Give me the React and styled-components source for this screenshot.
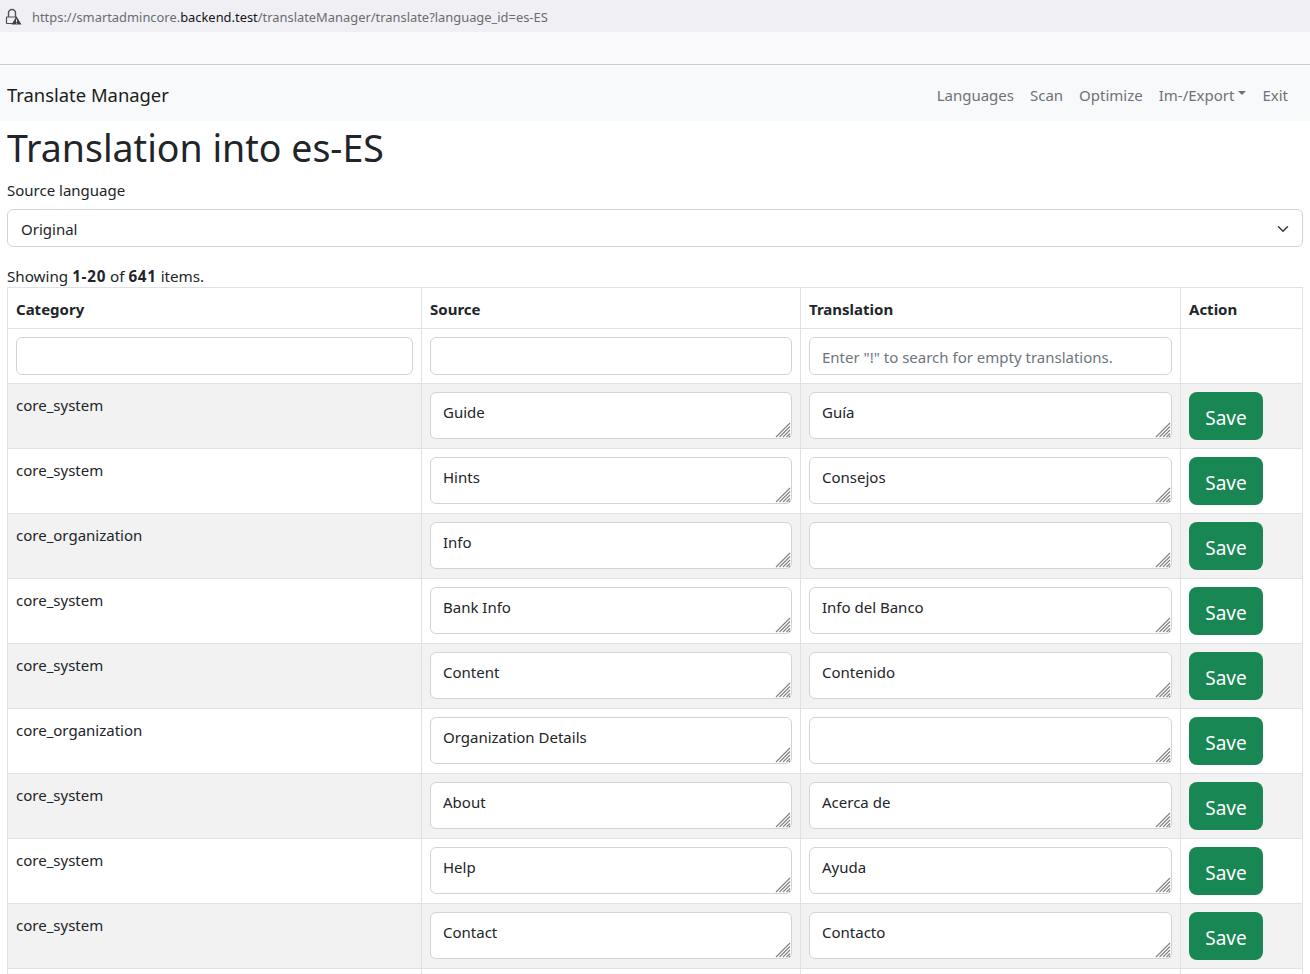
import React from 'react';
import styled, { createGlobalStyle } from 'styled-components';

const GlobalStyle = createGlobalStyle`
  html, body {
    margin: 0;
    height: 974px;
    overflow: hidden;
    background: #fff;
  }
  body {
    font-family: "Noto Sans", "Open Sans", sans-serif;
    font-size: 15px;
    color: #212529;
  }
  * { box-sizing: border-box; }
`;

const AddressBar = styled.div`
  height: 32px;
  background: #f0f0f4;
  display: flex;
  align-items: center;
  padding: 1px 0 0 5px;
  gap: 10px;
  font-size: 12.9px;
  color: #6c6c72;
`;

const Host = styled.span`
  color: #15141a;
`;

const ToolStrip = styled.div`
  height: 33px;
  background: #f9f9fb;
  border-bottom: 1px solid #ccc;
`;

const Navbar = styled.nav`
  height: 56px;
  background: #f8f9fa;
  display: flex;
  align-items: center;
  justify-content: space-between;
  padding: 3px 22px 0 7px;
`;

const Brand = styled.a`
  font-size: 18.4px;
  color: #1a1d20;
`;

const NavLinks = styled.div`
  display: flex;
  gap: 16px;
  font-size: 15px;
`;

const NavLink = styled.a`
  color: #6f7276;
  display: flex;
  align-items: center;
`;

const Caret = styled.span`
  margin-left: 4px;
  margin-top: -3px;
  border-top: 4px solid #6f7276;
  border-left: 4px solid transparent;
  border-right: 4px solid transparent;
`;

const Content = styled.main`
  padding: 0 7px;
`;

const Title = styled.h1`
  margin: 0;
  font-size: 37.5px;
  font-weight: 400;
  line-height: 54px;
`;

const FieldLabel = styled.div`
  height: 24px;
  line-height: 24px;
  margin-top: 3px;
`;

const SelectBox = styled.div`
  height: 38px;
  margin-top: 7px;
  border: 1px solid #ced4da;
  border-radius: 6px;
  display: flex;
  align-items: center;
  justify-content: space-between;
  padding: 1px 13px 0;
`;

const Summary = styled.div`
  margin-top: 18px;
  height: 22px;
  line-height: 22px;
  font-size: 15.2px;
  b { font-weight: 700; letter-spacing: 0.75px; }
`;

const Table = styled.table`
  width: 1295px;
  border-collapse: collapse;
  table-layout: fixed;
`;

const HeadCell = styled.th`
  height: 41px;
  padding: 2px 8px 0;
  border: 1px solid #dee2e6;
  text-align: left;
  font-weight: 700;
`;

const Row = styled.tr`
  background: ${({ $striped }) => ($striped ? '#f2f2f2' : '#fff')};
`;

const Cell = styled.td`
  height: ${({ $h }) => $h || 65}px;
  padding: 8px;
  border: 1px solid #dee2e6;
  vertical-align: top;
`;

const CategoryCell = styled(Cell)`
  line-height: 27px;
`;

const FilterInput = styled.input`
  display: block;
  width: 100%;
  height: 38px;
  padding: 2px 12px 0;
  border: 1px solid #ced4da;
  border-radius: 6px;
  background: #fff;
  font: inherit;
  color: #212529;
  &::placeholder { color: #6c757d; opacity: 1; }
`;

const TextAreaWrap = styled.div`
  position: relative;
`;

const TextArea = styled.textarea`
  display: block;
  width: 100%;
  height: 47px;
  padding: 7px 12px 5px;
  border: 1px solid #ced4da;
  border-radius: 6px;
  background: #fff;
  font: inherit;
  line-height: 24px;
  color: #212529;
  resize: none;
  overflow: hidden;
`;

const Grip = styled.svg`
  position: absolute;
  right: 1px;
  bottom: 1px;
  pointer-events: none;
`;

const SaveButton = styled.button`
  display: block;
  width: 74px;
  height: 48px;
  padding: 4px 0 0;
  border: none;
  border-radius: 8px;
  background: #198754;
  color: #fff;
  font: inherit;
  font-size: 19px;
`;

const LockIcon = () => (
  <svg width="17" height="17" viewBox="0 0 17 17" fill="none">
    <path d="M3.5 9V5a3.5 3.5 0 0 1 7 0v4" stroke="#4f4f55" strokeWidth="1.4" />
    <path d="M2 9h9v6.5H2a.5.5 0 0 1-.5-.5V9.5A.5.5 0 0 1 2 9z" fill="#f0f0f4" stroke="#4f4f55" strokeWidth="1.2" />
    <path d="M11.5 8.5L16.5 16.5H6.5z" fill="#3e3e44" />
    <path d="M11.5 11.5v2.5M11.5 14.8v.8" stroke="#f0f0f4" strokeWidth="1" />
  </svg>
);

const Chevron = () => (
  <svg width="12" height="12" viewBox="0 0 16 16" fill="none">
    <path d="M2 5l6 6 6-6" stroke="#343a40" strokeWidth="2" strokeLinecap="round" strokeLinejoin="round" />
  </svg>
);

const GripIcon = () => (
  <Grip width="16" height="16" viewBox="0 0 16 16" stroke="#808080" strokeWidth="1.1">
    <path d="M1 15L15 1M4.5 15L15 4.5M8 15l7-7M11.5 15l3.5-3.5M14 15l1-1" />
  </Grip>
);

const rows = [
  ['core_system', 'Guide', 'Guía'],
  ['core_system', 'Hints', 'Consejos'],
  ['core_organization', 'Info', ''],
  ['core_system', 'Bank Info', 'Info del Banco'],
  ['core_system', 'Content', 'Contenido'],
  ['core_organization', 'Organization Details', ''],
  ['core_system', 'About', 'Acerca de'],
  ['core_system', 'Help', 'Ayuda'],
  ['core_system', 'Contact', 'Contacto'],
  ['', '', ''],
];

const App = () => (
  <>
    <GlobalStyle />
    <AddressBar>
      <LockIcon />
      <span>https://smartadmincore.<Host>backend.test</Host>/translateManager/translate?language_id=es-ES</span>
    </AddressBar>
    <ToolStrip />
    <Navbar>
      <Brand>Translate Manager</Brand>
      <NavLinks>
        <NavLink>Languages</NavLink>
        <NavLink>Scan</NavLink>
        <NavLink>Optimize</NavLink>
        <NavLink>Im-/Export<Caret /></NavLink>
        <NavLink>Exit</NavLink>
      </NavLinks>
    </Navbar>
    <Content>
      <Title>Translation into es-ES</Title>
      <FieldLabel>Source language</FieldLabel>
      <SelectBox>Original<Chevron /></SelectBox>
      <Summary>Showing <b>1-20</b> of <b>641</b> items.</Summary>
      <Table>
        <colgroup>
          <col width="414" />
          <col width="379" />
          <col width="380" />
          <col width="122" />
        </colgroup>
        <thead>
          <tr>
            <HeadCell>Category</HeadCell>
            <HeadCell>Source</HeadCell>
            <HeadCell>Translation</HeadCell>
            <HeadCell>Action</HeadCell>
          </tr>
        </thead>
        <tbody>
          <tr>
            <Cell $h={55}><FilterInput /></Cell>
            <Cell $h={55}><FilterInput /></Cell>
            <Cell $h={55}><FilterInput placeholder={'Enter "!" to search for empty translations.'} /></Cell>
            <Cell $h={55} />
          </tr>
          {rows.map(([category, source, translation], i) => (
            <Row key={i} $striped={i % 2 === 0}>
              <CategoryCell>{category}</CategoryCell>
              <Cell><TextAreaWrap><TextArea defaultValue={source} /><GripIcon /></TextAreaWrap></Cell>
              <Cell><TextAreaWrap><TextArea defaultValue={translation} /><GripIcon /></TextAreaWrap></Cell>
              <Cell>{i < 9 && <SaveButton>Save</SaveButton>}</Cell>
            </Row>
          ))}
        </tbody>
      </Table>
    </Content>
  </>
);

export default App;
